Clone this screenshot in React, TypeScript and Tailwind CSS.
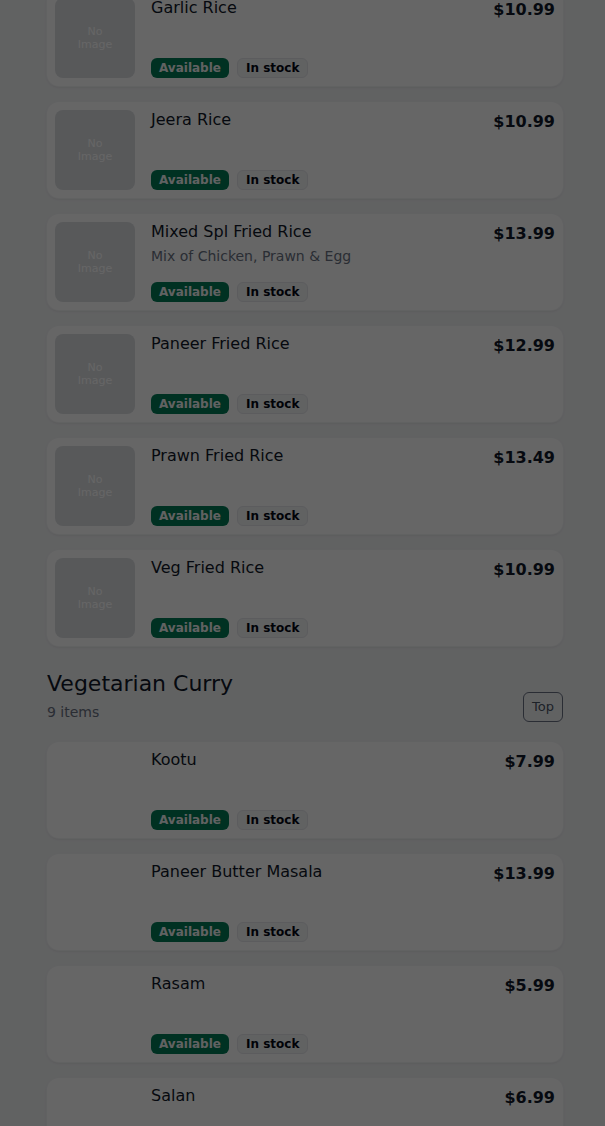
type Item = {
  name: string;
  price: string;
  desc?: string;
  image?: boolean;
};

const riceItems: Item[] = [
  { name: "Garlic Rice", price: "$10.99", image: true },
  { name: "Jeera Rice", price: "$10.99", image: true },
  { name: "Mixed Spl Fried Rice", price: "$13.99", desc: "Mix of Chicken, Prawn & Egg", image: true },
  { name: "Paneer Fried Rice", price: "$12.99", image: true },
  { name: "Prawn Fried Rice", price: "$13.49", image: true },
  { name: "Veg Fried Rice", price: "$10.99", image: true },
];

const curryItems: Item[] = [
  { name: "Kootu", price: "$7.99" },
  { name: "Paneer Butter Masala", price: "$13.99" },
  { name: "Rasam", price: "$5.99" },
  { name: "Salan", price: "$6.99" },
];

function MenuCard({ item }: { item: Item }) {
  return (
    <div className="flex gap-4 rounded-xl bg-white p-2 shadow-sm ring-1 ring-gray-100">
      {item.image ? (
        <div className="flex h-20 w-20 shrink-0 items-center justify-center rounded-lg bg-[#dcdee2] text-center text-[11px] leading-[13px] text-white">
          No
          <br />
          Image
        </div>
      ) : (
        <div className="h-20 w-20 shrink-0" />
      )}
      <div className="flex min-w-0 flex-1 flex-col justify-between">
        <div className="flex items-start justify-between gap-3">
          <div className="min-w-0">
            <div className="text-base leading-5 text-gray-900">{item.name}</div>
            {item.desc && (
              <div className="mt-1 text-sm leading-5 text-gray-500">{item.desc}</div>
            )}
          </div>
          <div className="text-base font-bold leading-6 text-gray-900">{item.price}</div>
        </div>
        <div className="flex items-center gap-2">
          <span className="rounded-md bg-emerald-700 px-2 py-0.5 text-xs font-bold leading-4 text-gray-100">
            Available
          </span>
          <span className="rounded-md border border-gray-200 bg-gray-100 px-2 py-px text-xs font-bold leading-4 text-gray-950">
            In stock
          </span>
        </div>
      </div>
    </div>
  );
}

export default function App() {
  return (
    <div className="relative min-h-screen overflow-hidden bg-gray-100 font-['DejaVu_Sans',sans-serif]">
      <main className="-mt-[10px] ml-[47px] w-[516px] pb-10">
        <div className="flex flex-col gap-4">
          {riceItems.map((item) => (
            <MenuCard key={item.name} item={item} />
          ))}
        </div>

        <section className="mt-6">
          <div className="mb-5 flex items-end justify-between">
            <div>
              <h2 className="text-[22px] leading-7 text-gray-900">Vegetarian Curry</h2>
              <p className="mt-1 text-sm leading-5 text-gray-500">9 items</p>
            </div>
            <button className="rounded-md border border-gray-500 bg-transparent px-2 py-1 text-[13px] leading-5 text-gray-600">
              Top
            </button>
          </div>
          <div className="flex flex-col gap-4">
            {curryItems.map((item) => (
              <MenuCard key={item.name} item={item} />
            ))}
          </div>
        </section>
      </main>

      {/* dim overlay */}
      <div className="fixed inset-0 bg-black/60" />
    </div>
  );
}
